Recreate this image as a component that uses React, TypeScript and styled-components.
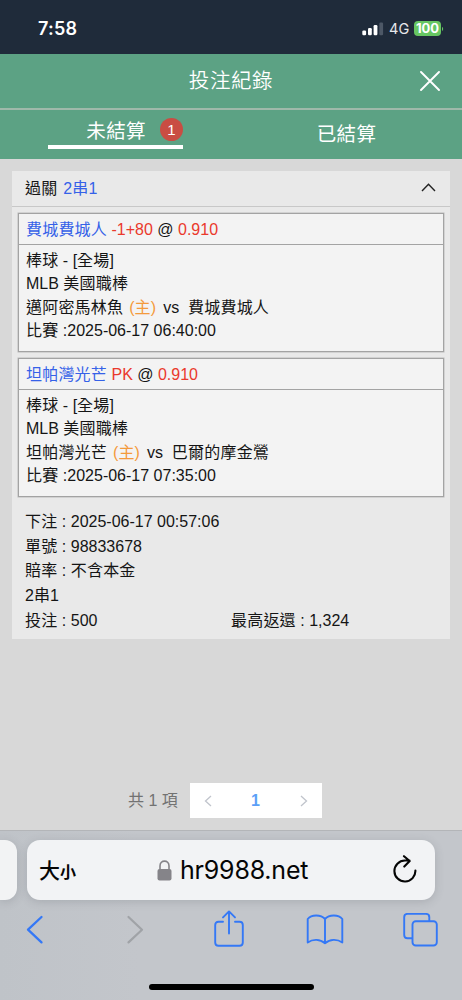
import React from "react";
import styled, { createGlobalStyle } from "styled-components";

const Global = createGlobalStyle`
  * { box-sizing: border-box; }
  body { margin: 0; background: #d8d8d8; }
`;

const Screen = styled.div`
  width: 462px;
  height: 1000px;
  display: flex;
  flex-direction: column;
  overflow: hidden;
  background: #d8d8d8;
  color: #151515;
  font-family: "Liberation Sans", "Noto Sans CJK TC", sans-serif;
  font-size: 16px;
`;

const StatusBar = styled.div`
  height: 54px;
  padding: 3px 18px 0 38px;
  display: flex;
  align-items: center;
  background: #1f2b3a;
  color: #fff;
`;

const Clock = styled.span`
  flex: 1;
  font: 600 18px/20px Inter, sans-serif;
  letter-spacing: 0.2px;
`;

const Network = styled.span`
  margin-left: 5px;
  width: 21px;
  font: 400 14.5px/18px Inter, sans-serif;
  letter-spacing: 0.1px;
  color: #e6e8eb;
`;

const Battery = styled.span`
  margin-left: 4px;
  width: 27px;
  height: 15px;
  border-radius: 4px;
  background: #66c662;
  text-align: center;
  font: 700 13px/15px Inter, sans-serif;
`;

const TitleBar = styled.header`
  height: 54px;
  display: grid;
  grid-template-columns: 64px 1fr 64px;
  align-items: center;
  background: #5ca284;
  color: #fff;
`;

const Title = styled.h1`
  margin: 0;
  text-align: center;
  font-size: 20.5px;
  line-height: 28px;
  font-weight: 350;
  letter-spacing: 0.6px;
`;

const CloseButton = styled.span`
  display: flex;
  justify-content: center;
`;

const Tabs = styled.nav`
  height: 51px;
  display: grid;
  grid-template-columns: 1fr 1fr;
  border-top: 2px solid #9fb9aa;
  background: #5ca284;
  color: #fff;
`;

const Tab = styled.div<{ $active?: boolean }>`
  display: flex;
  justify-self: center;
  align-items: center;
  justify-content: ${(p) => (p.$active ? "flex-end" : "center")};
  width: 135px;
  height: ${(p) => (p.$active ? 39 : 45)}px;
  padding-top: ${(p) => (p.$active ? 3 : 0)}px;
  border-bottom: ${(p) => (p.$active ? "4px solid #fff" : "none")};
  font-size: 19.5px;
  letter-spacing: 0.4px;
`;

const Count = styled.span`
  margin-left: 14px;
  width: 23px;
  height: 23px;
  border-radius: 50%;
  background: #c94d43;
  text-align: center;
  font: 15px/23px "Liberation Sans", sans-serif;
  letter-spacing: 0;
`;

const Content = styled.main`
  height: 671px;
  padding: 12px 12px 0;
  display: flex;
  flex-direction: column;
`;

const Card = styled.section`
  height: 468px;
  background: #e9e9e9;
`;

const CardHeader = styled.div`
  height: 36px;
  padding: 0 14px 0 13px;
  display: flex;
  align-items: center;
  justify-content: space-between;
  border-bottom: 1px solid #c8c8c8;
  line-height: 34px;
`;

const FoldType = styled.span`
  margin-left: 1.5px;
  color: #3561e8;
`;

const Bet = styled.article`
  height: 139px;
  margin: 6px 6px 0;
  border: 1px solid #a3a3a3;
  background: #f3f3f3;
  box-shadow: 0 0 0 0.5px #bcbcbc;
`;

const BetHeader = styled.div`
  height: 31px;
  padding: 0 7px;
  line-height: 31px;
  border-bottom: 1px solid #a3a3a3;
  white-space: pre;
`;

const BetBody = styled.div`
  padding: 4px 7px;
`;

const Line = styled.div`
  height: 23.4px;
  line-height: 23.4px;
  white-space: pre;
`;

const Summary = styled.div`
  padding: 13px 13px 0;
`;

const SummaryRow = styled.div`
  height: 24.7px;
  line-height: 24.7px;
  display: grid;
  grid-template-columns: 206px 1fr;
  white-space: pre;
`;

const Tone = styled.span<{ $color: string }>`
  color: ${(p) => p.$color};
`;

const HostMark = styled.span`
  margin: 0 2.6px 0 1.6px;
  color: #f39a3c;
`;

const Cjk = styled.span`
  letter-spacing: 0.2px;
`;

const Pagination = styled.div`
  margin-top: 144px;
  padding-left: 116px;
  height: 35px;
  display: flex;
  align-items: center;
  color: #727272;
`;

const Total = styled.span`
  width: 62px;
  height: 35px;
  line-height: 35px;
`;

const Pager = styled.div`
  width: 132px;
  height: 35px;
  display: grid;
  grid-template-columns: 35px 1fr 37px;
  align-items: center;
  justify-items: center;
  background: #fff;
`;

const PageNumber = styled.b`
  height: 20px;
  padding-left: 1px;
  color: #5b9ff7;
  font-size: 16px;
  line-height: 19px;
`;

const Browser = styled.footer`
  height: 170px;
  display: flex;
  flex-direction: column;
  border-top: 1px solid #b3b5b8;
  background: linear-gradient(90deg, #bfc3c8, #c3c6cb 30%, #c3c6cb);
`;

const AddressRow = styled.div`
  height: 69px;
  padding-top: 9px;
  display: flex;
  gap: 10px;
`;

const PreviousPage = styled.div`
  width: 17px;
  height: 60px;
  border-radius: 0 12px 12px 0;
  background: #f2f3f4;
  box-shadow: 0 2px 10px rgba(70, 75, 85, 0.2);
`;

const AddressBar = styled.div`
  width: 408px;
  height: 60px;
  padding: 0 17px 0 12px;
  display: flex;
  align-items: center;
  border-radius: 13px;
  background: #f2f3f5;
  box-shadow: 0 2px 10px rgba(70, 75, 85, 0.2);
  color: #050505;
`;

const TextSize = styled.span`
  width: 118px;
  font: 500 21px/30px "Noto Sans CJK TC", sans-serif;
  small {
    font-size: 16px;
    font-weight: 700;
  }
`;

const Host = styled.span`
  flex: 1;
  margin-left: 8px;
  font: 400 25px/32px Inter, sans-serif;
  letter-spacing: -0.2px;
`;

const Toolbar = styled.div`
  height: 60px;
  display: grid;
  grid-template-columns: 70px 130px 58px 134px 57px;
  align-items: center;
  justify-items: center;
`;

const HomeIndicator = styled.div`
  width: 165px;
  height: 6px;
  margin: 24px auto 0;
  border-radius: 3px;
  background: #000;
`;

const BLUE = "#3478f6";
const LINK = "#3561e8";
const RED = "#ea392c";

function Mixed({ children }: { children: string }) {
  return (
    <span>
      {children
        .split(/([\u4e00-\u9fff]+)/)
        .map((part, i) => (i % 2 ? <Cjk key={i}>{part}</Cjk> : part))}
    </span>
  );
}

interface BetData {
  pick: string;
  handicap: string;
  home: string;
  away: string;
  time: string;
}

const bets: BetData[] = [
  { pick: "費城費城人", handicap: "-1+80", home: "邁阿密馬林魚", away: "費城費城人", time: "2025-06-17 06:40:00" },
  { pick: "坦帕灣光芒", handicap: "PK", home: "坦帕灣光芒", away: "巴爾的摩金鶯", time: "2025-06-17 07:35:00" },
];

function BetItem({ bet }: { bet: BetData }) {
  return (
    <Bet>
      <BetHeader>
        <Tone $color={LINK}><Mixed>{bet.pick}</Mixed></Tone>{" "}
        <Tone $color={RED}>{bet.handicap}</Tone>{" @ "}
        <Tone $color={RED}>0.910</Tone>
      </BetHeader>
      <BetBody>
        <Line><Mixed>棒球 - [全場]</Mixed></Line>
        <Line><Mixed>MLB 美國職棒</Mixed></Line>
        <Line>
          <Mixed>{bet.home}</Mixed>{" "}
          <HostMark><Mixed>(主)</Mixed></HostMark>{" vs  "}
          <Mixed>{bet.away}</Mixed>
        </Line>
        <Line><Mixed>{`比賽 :${bet.time}`}</Mixed></Line>
      </BetBody>
    </Bet>
  );
}

export default function App() {
  return (
    <Screen>
      <Global />
      <StatusBar>
        <Clock>7:58</Clock>
        <svg width="22" height="14" viewBox="0 0 22 14">
          <rect x="0.3" y="8.5" width="3.8" height="4.8" rx="1.2" fill="#fff" />
          <rect x="6" y="6" width="3.8" height="7.3" rx="1.2" fill="#fff" />
          <rect x="11.6" y="3" width="3.8" height="10.3" rx="1.2" fill="#fff" />
          <rect x="17.3" y="0.5" width="3.8" height="12.8" rx="1.2" fill="#4d5866" />
        </svg>
        <Network>4G</Network>
        <Battery>100</Battery>
        <svg width="3" height="6" viewBox="0 0 3 6"><path d="M1 0.8Q3.4 3 1 5.2Z" fill="#66c662" /></svg>
      </StatusBar>
      <TitleBar>
        <span />
        <Title>投注紀錄</Title>
        <CloseButton>
          <svg width="20" height="20" viewBox="0 0 20 20" stroke="#fff" strokeWidth="1.9" strokeLinecap="round">
            <path d="M1 1L19 19M19 1L1 19" />
          </svg>
        </CloseButton>
      </TitleBar>
      <Tabs>
        <Tab $active>未結算<Count>1</Count></Tab>
        <Tab>已結算</Tab>
      </Tabs>
      <Content>
        <Card>
          <CardHeader>
            <span><Mixed>過關</Mixed>{" "}<FoldType><Mixed>2串1</Mixed></FoldType></span>
            <svg width="15" height="11" viewBox="0 0 15 11" fill="none" stroke="#222" strokeWidth="1.4">
              <path d="M1 8L7.5 1.3L14 8" />
            </svg>
          </CardHeader>
          {bets.map((bet) => <BetItem key={bet.pick} bet={bet} />)}
          <Summary>
            <SummaryRow><Mixed>下注 : 2025-06-17 00:57:06</Mixed></SummaryRow>
            <SummaryRow><Mixed>單號 : 98833678</Mixed></SummaryRow>
            <SummaryRow><Mixed>賠率 : 不含本金</Mixed></SummaryRow>
            <SummaryRow><Mixed>2串1</Mixed></SummaryRow>
            <SummaryRow>
              <Mixed>投注 : 500</Mixed>
              <Mixed>最高返還 : 1,324</Mixed>
            </SummaryRow>
          </Summary>
        </Card>
        <Pagination>
          <Total>共 1 項</Total>
          <Pager>
            <svg width="8" height="12" viewBox="0 0 8 12" fill="none" stroke="#c0c4cc" strokeWidth="1.3"><path d="M7 1L1.5 6L7 11" /></svg>
            <PageNumber>1</PageNumber>
            <svg width="8" height="12" viewBox="0 0 8 12" fill="none" stroke="#c0c4cc" strokeWidth="1.3"><path d="M1 1L6.5 6L1 11" /></svg>
          </Pager>
        </Pagination>
      </Content>
      <Browser>
        <AddressRow>
          <PreviousPage />
          <AddressBar>
            <TextSize>大<small>小</small></TextSize>
            <svg width="15" height="21" viewBox="0 0 15 21">
              <path d="M3 10V6C3 -0.5 12 -0.5 12 6V10" fill="none" stroke="#858489" strokeWidth="1.6" />
              <rect x="0.5" y="9" width="14" height="11.5" rx="2" fill="#858489" />
            </svg>
            <Host>hr9988.net</Host>
            <svg width="26" height="30" viewBox="0 0 26 30" fill="none" stroke="#050505" strokeWidth="2.1" strokeLinecap="round" strokeLinejoin="round">
              <path d="M23.4 15.5A10.5 10.5 0 1 1 12.9 5.5H17.5M12 1.2L17.7 6L12.3 11.6" />
            </svg>
          </AddressBar>
        </AddressRow>
        <Toolbar>
          <svg width="18" height="30" viewBox="0 0 18 30" fill="none" stroke={BLUE} strokeWidth="2.3" strokeLinecap="round" strokeLinejoin="round"><path d="M15.5 2L2 14.7L15.5 27.4" /></svg>
          <svg width="18" height="30" viewBox="0 0 18 30" fill="none" stroke="#a0a3a7" strokeWidth="2.2" strokeLinecap="round" strokeLinejoin="round"><path d="M2.5 2L16 14.7L2.5 27.4" /></svg>
          <svg width="30" height="40" viewBox="0 -1 30 40" fill="none" stroke={BLUE} strokeWidth="1.9" strokeLinecap="round" strokeLinejoin="round">
            <path d="M9 10.8H4.5Q1.2 10.8 1.2 14.1V31.4Q1.2 34.7 4.5 34.7H25.5Q28.8 34.7 28.8 31.4V14.1Q28.8 10.8 25.5 10.8H21M15 22.5V0.4M9 6.4L15 0.4L21 6.4" />
          </svg>
          <svg width="38" height="32" viewBox="0 0 38 32" fill="none" stroke={BLUE} strokeWidth="1.9" strokeLinecap="round" strokeLinejoin="round">
            <path d="M19 5C15 0.5 5.5 0.3 1.7 5V28.5C7 24.8 14 25 19 29.3C24 25 31 24.8 36.3 28.5V5C32.5 0.3 23 0.5 19 5V29.3" />
          </svg>
          <svg width="35" height="34" viewBox="0 0 35 34" fill="none" stroke={BLUE} strokeWidth="1.9">
            <path d="M9.5 25.3H4.5Q1.2 25.3 1.2 22V4.2Q1.2 0.9 4.5 0.9H23Q26.3 0.9 26.3 4.2V8.2" />
            <rect x="9.5" y="8.2" width="24.3" height="24.3" rx="3.3" />
          </svg>
        </Toolbar>
        <HomeIndicator />
      </Browser>
    </Screen>
  );
}
